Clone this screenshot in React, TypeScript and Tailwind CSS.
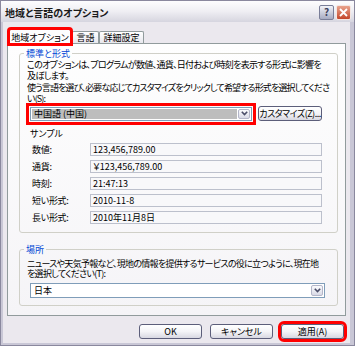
import React from 'react';

const jp = "font-['Noto_Sans_CJK_JP',sans-serif] [font-feature-settings:'palt']";

const ArrowButton: React.FC<{ className?: string }> = ({ className = '' }) => (
  <div
    className={`flex items-center justify-center rounded-[2px] border border-[#b4b6c9] bg-gradient-to-b from-[#fbfbfd] to-[#d9dae6] ${className}`}
  >
    <svg width="7" height="5" viewBox="0 0 7 5">
      <path d="M0.8 0.8 L3.5 3.6 L6.2 0.8" fill="none" stroke="#4a4d68" strokeWidth="1.6" />
    </svg>
  </div>
);

const XpButton: React.FC<{ children: React.ReactNode; className?: string }> = ({ children, className = '' }) => (
  <div
    className={`flex h-[15px] items-center justify-center whitespace-nowrap rounded-[3px] border border-[#5c5e7a] bg-gradient-to-b from-[#ffffff] via-[#f4f4f7] to-[#d8d8e2] text-[9px] leading-none text-black ${className}`}
  >
    {children}
  </div>
);

const samples = [
  { label: '数値:', value: '123,456,789.00' },
  { label: '通貨:', value: '￥123,456,789.00' },
  { label: '時刻:', value: '21:47:13' },
  { label: '短い形式:', value: '2010-11-8' },
  { label: '長い形式:', value: '2010年11月8日' },
];

export default function App() {
  return (
    <div className={`${jp} flex h-[346px] w-[355px] flex-col border border-[#8a889e] bg-[#ebe8ee] text-black`}>
      {/* title bar */}
      <div className="flex h-[21px] items-center bg-gradient-to-b from-[#fdfdfe] via-[#efeef3] to-[#d6d5df] pl-[4px] pr-[3px]">
        <span className="pt-[2px] text-[10px] font-bold leading-none text-[#1a1a1a]">地域と言語のオプション</span>
        <div className="ml-auto flex gap-[2px] pt-[1px]">
          <div className="flex h-[15px] w-[15px] items-center justify-center rounded-[2px] border border-[#7a7e98] bg-gradient-to-b from-[#f2f3f8] to-[#a7abc2] text-[10px] font-bold leading-none text-[#3c3f5c]">
            ?
          </div>
          <div className="flex h-[15px] w-[15px] items-center justify-center rounded-[2px] border border-[#f4e6e2] bg-gradient-to-b from-[#e8a28c] to-[#c34529]">
            <svg width="9" height="9" viewBox="0 0 9 9">
              <path d="M1 1 L8 8 M8 1 L1 8" stroke="#ffffff" strokeWidth="1.8" />
            </svg>
          </div>
        </div>
      </div>

      {/* client area */}
      <div className="flex flex-1 flex-col border-x-[2px] border-b-[2px] border-[#c9c7d6] border-r-[4px]">
        {/* tabs */}
        <div className="ml-[6px] mt-[7px] flex items-end">
          <div className="relative z-10 -mb-px flex h-[15px] w-[62px] items-center justify-center rounded-t-[2px] border border-b-0 border-[#919b9c] bg-[#fdfdfe] text-[9px] leading-none outline-3 outline-offset-[-1px] outline-[#ff0000]">
            地域オプション
          </div>
          <div className="ml-[1px] flex h-[12px] w-[27px] items-center justify-center rounded-t-[2px] border border-b-0 border-[#919b9c] bg-gradient-to-b from-[#ffffff] to-[#e8e8ee] text-[9px] leading-none">
            言語
          </div>
          <div className="flex h-[12px] w-[45px] items-center justify-center rounded-t-[2px] border border-b-0 border-[#919b9c] bg-gradient-to-b from-[#ffffff] to-[#e8e8ee] text-[9px] leading-none">
            詳細設定
          </div>
        </div>

        {/* tab panel */}
        <div className="ml-[4px] flex w-[339px] flex-col border border-[#919b9c] bg-gradient-to-b from-[#fefefe] to-[#f5f4f7] pb-[9px]">
          <fieldset className="ml-[11px] mt-[4px] w-[319px] rounded-[3px] border border-[#d0d0c8] pb-[8px]">
            <legend className="ml-[4px] px-[2px] text-[9px] leading-[11px] text-[#0046d5]">標準と形式</legend>
            <p className="pl-[7px] text-[9px] leading-[11px] tracking-[-0.7px] whitespace-nowrap">
              このオプションは、プログラムが数値、通貨、日付および時刻を表示する形式に影響を
              <br />
              及ぼします。
            </p>
            <p className="mt-[1px] pl-[7px] text-[9px] leading-[11px] tracking-[-0.85px] whitespace-nowrap">
              使う言語を選び、必要な応じてカスタマイズをクリックして希望する形式を選択してくださ
              <br />
              い(S):
            </p>
            <div className="ml-[10px] mt-[2px] flex items-center">
              <div className="flex h-[14px] w-[222px] border border-[#7f9db9] bg-white p-[1px] outline-3 outline-offset-[1px] outline-[#ff0000]">
                <div className="flex flex-1 items-center bg-[#bdbdbd] pl-[2px] text-[9px] leading-none">中国語 (中国)</div>
                <ArrowButton className="ml-[1px] w-[12px]" />
              </div>
              <XpButton className="ml-[6px] w-[64px] tracking-[-0.5px]">カスタマイズ(Z)...</XpButton>
            </div>
            <div className="ml-[10px] mt-[7px] text-[9px] leading-[11px]">サンプル</div>
            <div className="mt-[4px] flex flex-col gap-[4px]">
              {samples.map((s) => (
                <div key={s.label} className="flex items-center">
                  <span className="w-[70px] pl-[12px] text-[9px] leading-none tracking-[-0.3px]">{s.label}</span>
                  <div className="flex h-[13px] w-[232px] items-center border border-[#bcc0cc] bg-[#f8f8fa] pl-[2px] text-[9px] leading-none">
                    {s.value}
                  </div>
                </div>
              ))}
            </div>
          </fieldset>

          <fieldset className="ml-[11px] mt-[11px] w-[319px] rounded-[3px] border border-[#d0d0c8] pb-[7px]">
            <legend className="ml-[4px] px-[2px] text-[9px] leading-[11px] text-[#0046d5]">場所</legend>
            <p className="mt-[4px] pl-[7px] text-[9px] leading-[10px] tracking-[-0.7px] whitespace-nowrap">
              ニュースや天気予報など、現地の情報を提供するサービスの役に立つように、現在地
              <br />
              を選択してください(T):
            </p>
            <div className="ml-[10px] mt-[4px] flex h-[15px] w-[295px] items-center border border-[#7f9db9] bg-white p-[1px]">
              <div className="flex-1 pl-[2px] text-[9px] leading-none">日本</div>
              <ArrowButton className="h-full w-[12px]" />
            </div>
          </fieldset>
        </div>

        {/* footer buttons */}
        <div className="ml-[136px] mt-[8px] flex gap-[8px]">
          <XpButton className="w-[63px]">OK</XpButton>
          <XpButton className="w-[63px]">キャンセル</XpButton>
          <XpButton className="w-[63px] outline-3 outline-[#ff0000]">適用(A)</XpButton>
        </div>
      </div>
    </div>
  );
}
